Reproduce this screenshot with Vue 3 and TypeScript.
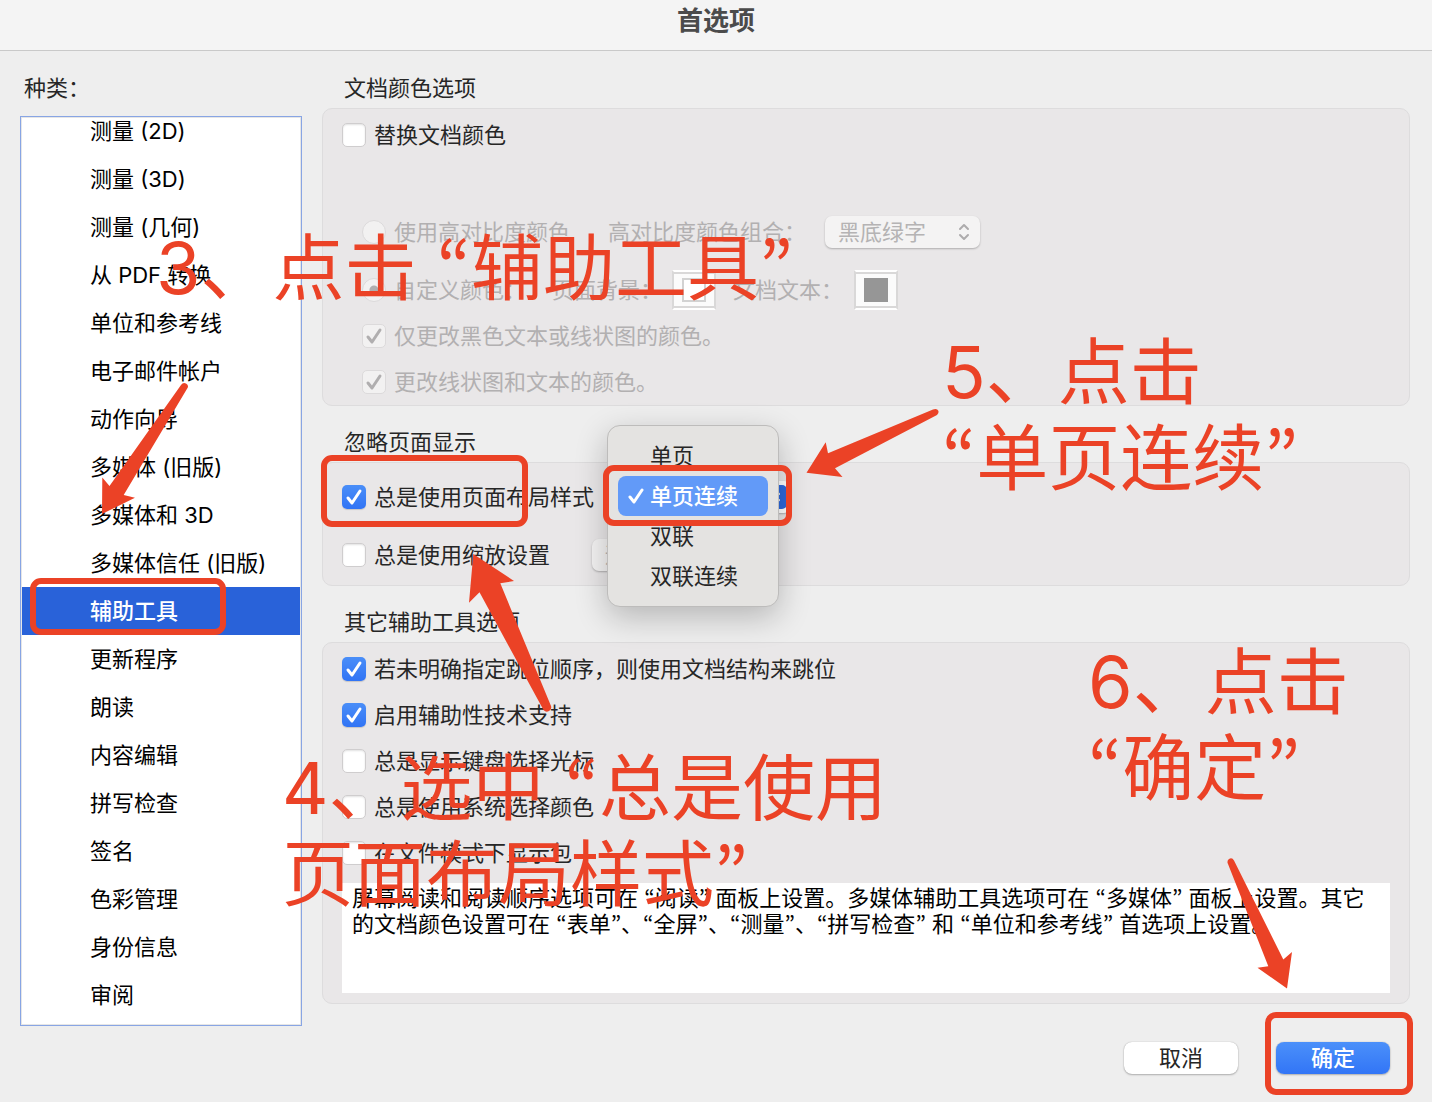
<script setup lang="ts">
import { ref } from 'vue'

interface Option {
  id: string
  label: string
  checked: boolean
}

interface Step {
  id: string
  lines: string[]
}

const categories: string[] = [
  '测量 (2D)',
  '测量 (3D)',
  '测量 (几何)',
  '从 PDF 转换',
  '单位和参考线',
  '电子邮件帐户',
  '动作向导',
  '多媒体 (旧版)',
  '多媒体和 3D',
  '多媒体信任 (旧版)',
  '辅助工具',
  '更新程序',
  '朗读',
  '内容编辑',
  '拼写检查',
  '签名',
  '色彩管理',
  '身份信息',
  '审阅',
]
const activeCategory = ref('辅助工具')

const replaceColors = ref(false)
const colorMode = ref('custom')
const colorOptions = ref<Option[]>([
  { id: 'only-black', label: '仅更改黑色文本或线状图的颜色。', checked: true },
  { id: 'line-art', label: '更改线状图和文本的颜色。', checked: true },
])

const useLayout = ref(true)
const useZoom = ref(false)
const layouts: string[] = ['单页', '单页连续', '双联', '双联连续']
const layout = ref('单页连续')

const otherOptions = ref<Option[]>([
  { id: 'tab-order', label: '若未明确指定跳位顺序，则使用文档结构来跳位', checked: true },
  { id: 'assistive', label: '启用辅助性技术支持', checked: true },
  { id: 'caret', label: '总是显示键盘选择光标', checked: false },
  { id: 'system-color', label: '总是使用系统选择颜色', checked: false },
  { id: 'portfolio', label: '在文件模式下显示包', checked: false },
])

const note =
  '屏幕阅读和阅读顺序选项可在 “阅读” 面板上设置。多媒体辅助工具选项可在 “多媒体” 面板上设置。其它的文档颜色设置可在 “表单”、“全屏”、“测量”、“拼写检查” 和 “单位和参考线” 首选项上设置。'

const steps: Step[] = [
  { id: 'step-3', lines: ['3、点击 “辅助工具”'] },
  { id: 'step-4', lines: ['4、选中 “总是使用', '页面布局样式”'] },
  { id: 'step-5', lines: ['5、点击', '“单页连续”'] },
  { id: 'step-6', lines: ['6、点击', '“确定”'] },
]

// Quotation marks are set in their own face, so cut the text around them.
const pieces = (text: string): string[] => text.split(/([“”])/).filter(Boolean)
const isQuote = (piece: string): boolean => piece === '“' || piece === '”'
</script>

<template>
  <div class="window">
    <header class="titlebar"><h1>首选项</h1></header>

    <main class="body">
      <nav class="sidebar" aria-labelledby="category-title">
        <h2 id="category-title" class="side-title">种类：</h2>
        <div class="list-box">
          <ul class="list">
            <li v-for="item in categories" :key="item">
              <button
                type="button"
                class="category"
                :class="{ active: item === activeCategory }"
                @click="activeCategory = item"
              >{{ item }}</button>
            </li>
          </ul>
        </div>
      </nav>

      <div class="content">
        <h2 class="heading">文档颜色选项</h2>
        <section class="panel colors">
          <div class="row">
            <label class="option"><input v-model="replaceColors" type="checkbox">替换文档颜色</label>
          </div>
          <div class="row nested contrast">
            <label class="option"><input v-model="colorMode" type="radio" value="contrast" disabled>使用高对比度颜色</label>
            <label for="combo" class="combo-label">高对比度颜色组合：</label>
            <span class="select-wrap combo">
              <select id="combo" disabled><option>黑底绿字</option></select>
              <svg class="chevrons" viewBox="0 0 12 18"><path d="M2 6l4-4 4 4M2 12l4 4 4-4" /></svg>
            </span>
          </div>
          <div class="row nested custom">
            <label class="option"><input v-model="colorMode" type="radio" value="custom" disabled>自定义颜色：</label>
            <span class="swatch-label page">页面背景：</span>
            <button type="button" class="swatch" disabled aria-label="页面背景"><span class="chip light"></span></button>
            <span class="swatch-label doc">文档文本：</span>
            <button type="button" class="swatch" disabled aria-label="文档文本"><span class="chip"></span></button>
          </div>
          <div v-for="option in colorOptions" :key="option.id" class="row nested">
            <label class="option"><input v-model="option.checked" type="checkbox" disabled>{{ option.label }}</label>
          </div>
        </section>

        <h2 class="heading">忽略页面显示</h2>
        <section class="panel display">
          <div class="row">
            <label class="option layout-option"><input v-model="useLayout" type="checkbox">总是使用页面布局样式</label>
            <span class="select-wrap layout">
              <select v-model="layout" aria-label="页面布局样式">
                <option v-for="name in layouts" :key="name">{{ name }}</option>
              </select>
              <span class="cap"><svg class="cap-icon" viewBox="0 0 12 18"><path d="M2 6l4-4 4 4M2 12l4 4 4-4" /></svg></span>
              <span class="menu" role="menu">
                <button
                  v-for="name in layouts"
                  :key="name"
                  type="button"
                  role="menuitemradio"
                  class="menu-item"
                  :class="{ picked: name === layout }"
                  @click="layout = name"
                >
                  <svg v-if="name === layout" class="tick" viewBox="0 0 16 16"><path d="M2 9l4 5 8-12" /></svg>{{ name }}
                </button>
              </span>
            </span>
          </div>
          <div class="row">
            <label class="option zoom-option"><input v-model="useZoom" type="checkbox">总是使用缩放设置</label>
            <span class="select-wrap zoom">
              <select aria-label="缩放" disabled><option>适合页面</option></select>
            </span>
          </div>
        </section>

        <h2 class="heading">其它辅助工具选项</h2>
        <section class="panel others">
          <div v-for="option in otherOptions" :key="option.id" class="row">
            <label class="option"><input v-model="option.checked" type="checkbox">{{ option.label }}</label>
          </div>
          <p class="note"><span v-for="(piece, i) in pieces(note)" :key="i" :class="{ quote: isQuote(piece) }">{{ piece }}</span></p>
        </section>
      </div>
    </main>

    <footer class="actions">
      <button type="button" class="action">取消</button>
      <button type="button" class="action primary">确定</button>
    </footer>

    <div class="notes">
      <svg class="marks" width="1432" height="1102" viewBox="0 0 1432 1102">
        <g class="frames">
          <rect x="33" y="581" width="190" height="51" rx="8" />
          <rect x="324" y="458" width="201" height="66" rx="8" />
          <rect x="606" y="468" width="183" height="55" rx="8" />
          <rect x="1268" y="1015" width="142" height="77" rx="8" />
        </g>
        <path d="M102 514L102.300 477.500L109.500 486L181 385Q183 382 186 383.500Q189 385 187.500 388L123.700 495L135 497.700Z" />
        <path d="M806.500 472.700L825.700 442.300L828 453.300L933 409.500Q937 408 938.500 411Q939 413 937 415L835 468.300L842.500 477Z" />
        <path d="M473.300 554L514 581L500.300 583.300L551 706Q552 709 549 711Q546 713 543.500 710L479.500 592.300L469 602.700Z" />
        <path d="M1287 988.500L1292 952L1283.300 959.500L1234 860.500Q1232 857 1229 859Q1226.500 861 1228 864L1268.300 966.300L1257.500 967.700Z" />
      </svg>
      <p v-for="step in steps" :key="step.id" class="step" :class="step.id">
        <span v-for="line in step.lines" :key="line" class="line"><span v-for="(piece, i) in pieces(line)" :key="i" :class="{ quote: isQuote(piece) }">{{ piece }}</span></span>
      </p>
    </div>
  </div>
</template>

<style>
body {
  margin: 0;
  background: #eeeeee;
}
</style>

<style scoped>
* {
  box-sizing: border-box;
}

.window {
  position: relative;
  display: flex;
  flex-direction: column;
  min-height: 100vh;
  overflow: hidden;
  background: #eeeeee;
  color: #262626;
  font: 22px/40px Inter, "Noto Sans CJK SC", sans-serif;
}

button,
select {
  margin: 0;
  border: 0;
  color: inherit;
  font: inherit;
}

.quote {
  font-family: "Noto Sans CJK KR", sans-serif;
  line-height: 1;
}

.titlebar {
  height: 51px;
  border-bottom: 1px solid #c9c9c9;
  background: #f4f4f4;
}

.titlebar h1 {
  margin: 0;
  color: #4b4b4b;
  font-size: 26px;
  font-weight: 700;
  line-height: 42px;
  text-align: center;
}

.body {
  display: flex;
  gap: 20px;
  padding: 1px 22px 0 20px;
}

.sidebar {
  display: flex;
  flex: 0 0 282px;
  flex-direction: column;
}

.side-title,
.heading {
  margin: 0;
  padding-top: 16px;
  font-size: 22px;
  font-weight: 400;
  line-height: 40px;
}

.side-title {
  padding-left: 4px;
  margin-bottom: 8px;
}

.heading {
  padding-left: 22px;
}

.list-box {
  height: 910px;
  overflow: hidden;
  border: 1px solid #88a5e4;
  background: #fff;
  box-shadow: inset 0 0 0 1px #e6e6e6;
}

.list {
  margin: -10px 1px 0;
  padding: 0;
  list-style: none;
}

.category {
  display: block;
  width: 100%;
  height: 48px;
  padding: 0 0 0 68px;
  background: none;
  color: #000;
  line-height: 48px;
  text-align: left;
}

.category.active {
  background: #2962d9;
  color: #fff;
  font-weight: 500;
}

.content {
  flex: 1;
  min-width: 0;
}

.panel {
  border: 1px solid #dddcdd;
  border-radius: 10px;
  background: #e9e7e8;
  padding: 3px 19px 0;
}

.row {
  display: flex;
  align-items: center;
  height: 46px;
  white-space: nowrap;
}

.nested {
  padding-left: 20px;
  color: #b2b0b1;
}

.contrast {
  margin-top: 51px;
}

.custom {
  margin-top: 12px;
}

.option {
  display: flex;
  align-items: center;
  gap: 8px;
}

.option input {
  appearance: none;
  flex: none;
  width: 24px;
  height: 24px;
  margin: 0;
  border: 1px solid #cfcdce;
  border-radius: 5px;
  background: #fff;
  box-shadow: inset 0 1px 2px rgba(0, 0, 0, 0.12);
}

.option input[type="radio"] {
  border-radius: 50%;
}

.option input:checked {
  border: 0;
  background: url("data:image/svg+xml,%3Csvg xmlns='http://www.w3.org/2000/svg' viewBox='0 0 24 24'%3E%3Cpath d='M6 13l4 5 8-12' fill='none' stroke='white' stroke-width='3' stroke-linecap='round' stroke-linejoin='round'/%3E%3C/svg%3E"), linear-gradient(#4a8ef8, #3174f5);
  box-shadow: 0 1px 1px rgba(0, 0, 0, 0.15);
}

.option input:disabled {
  border: 1px solid #dcdadb;
  background: #f2f1f1;
  box-shadow: none;
}

.option input[type="checkbox"]:disabled:checked {
  background: #f2f1f1 url("data:image/svg+xml,%3Csvg xmlns='http://www.w3.org/2000/svg' viewBox='0 0 24 24'%3E%3Cpath d='M6 13l4 5 8-12' fill='none' stroke='%23b0aeaf' stroke-width='3' stroke-linecap='round' stroke-linejoin='round'/%3E%3C/svg%3E") center / 24px;
}

.option input[type="radio"]:disabled:checked {
  background: radial-gradient(circle, #b0aeaf 4px, #f2f1f1 5px);
}

.select-wrap {
  position: relative;
  display: block;
  height: 32px;
}

.select-wrap select {
  appearance: none;
  display: block;
  width: 100%;
  height: 32px;
  padding: 0 13px;
  border-radius: 7px;
  background: #fff;
  box-shadow: 0 1px 2px rgba(0, 0, 0, 0.25);
  line-height: 32px;
}

.select-wrap select:disabled {
  background: #f4f3f3;
  color: #b5b3b4;
  opacity: 1;
}

.combo-label {
  margin-left: 38px;
  width: 217px;
}

.combo {
  width: 155px;
}

.chevrons {
  position: absolute;
  top: 7px;
  right: 10px;
  width: 12px;
  height: 18px;
}

.chevrons path,
.cap-icon path {
  fill: none;
  stroke: #adabac;
  stroke-width: 2;
  stroke-linecap: round;
  stroke-linejoin: round;
}

.cap-icon path {
  stroke: #fff;
}

.swatch-label {
  width: 120px;
}

.swatch-label.page {
  margin-left: 26px;
}

.swatch-label.doc {
  margin-left: 17px;
  width: 121px;
}

.swatch {
  display: grid;
  place-items: center;
  width: 44px;
  height: 40px;
  padding: 0;
  border: 2px solid #d9d8d8;
  border-top-color: #fff;
  border-bottom-color: #fff;
  background: #fbfbfb;
  box-shadow: inset 0 2px #d9d8d8, inset 0 -2px #d9d8d8;
}

.chip {
  width: 24px;
  height: 24px;
  background: #969696;
}

.chip.light {
  border: 2px solid #d2d2d2;
  background: #fff;
}

.display {
  padding: 11px 19px 7px;
}

.display .row + .row {
  margin-top: 12px;
}

.layout-option {
  width: 265px;
}

.zoom-option {
  width: 250px;
}

.layout {
  width: 184px;
}

.zoom {
  width: 160px;
}

.cap {
  position: absolute;
  top: 4px;
  right: 4px;
  display: grid;
  place-items: center;
  width: 24px;
  height: 24px;
  border-radius: 5px;
  background: #2e69dd;
}

.cap-icon {
  width: 12px;
  height: 18px;
}

.menu {
  position: absolute;
  z-index: 2;
  top: -56px;
  left: 0;
  width: 172px;
  padding: 10px;
  border: 1px solid #bdbcbb;
  border-radius: 13px;
  background: #e4e3e1;
  box-shadow: 0 10px 32px rgba(0, 0, 0, 0.24);
}

.menu-item {
  position: relative;
  display: block;
  width: 100%;
  height: 40px;
  padding: 0 0 0 32px;
  border-radius: 8px;
  background: none;
  line-height: 40px;
  text-align: left;
}

.menu-item.picked {
  background: #629af8;
  color: #fff;
  font-weight: 500;
}

.tick {
  position: absolute;
  top: 12px;
  left: 10px;
  width: 16px;
  height: 16px;
}

.tick path {
  fill: none;
  stroke: #fff;
  stroke-width: 3;
  stroke-linecap: round;
  stroke-linejoin: round;
}

.others {
  padding-bottom: 10px;
}

.note {
  height: 110px;
  margin: 7px 0 0;
  padding: 1px 10px 0 9px;
  border: 1px solid #fff;
  background: #fff;
  color: #000;
  line-height: 26px;
}

.actions {
  display: flex;
  justify-content: flex-end;
  gap: 38px;
  padding: 16px 42px 28px;
}

.action {
  width: 114px;
  height: 32px;
  padding: 0;
  border-radius: 8px;
  background: #fff;
  box-shadow: 0 0 1px rgba(0, 0, 0, 0.3), 0 1px 2px rgba(0, 0, 0, 0.25);
  line-height: 32px;
}

.action.primary {
  background: linear-gradient(#4b90fa, #3275f6);
  color: #fff;
  font-weight: 500;
}

.notes {
  position: absolute;
  z-index: 3;
  inset: 0;
  pointer-events: none;
}

.marks {
  position: absolute;
  top: 0;
  left: 0;
  fill: #eb4226;
}

.frames {
  fill: none;
  stroke: #eb4226;
  stroke-width: 6;
}

.step {
  position: absolute;
  margin: 0;
  color: #eb4226;
  font-size: 72px;
  line-height: 86px;
  white-space: nowrap;
}

.line {
  display: block;
}

.step-3 {
  top: 225px;
  left: 156px;
}

.step-4 {
  top: 745px;
  left: 282px;
}

.step-5 {
  top: 329px;
  left: 942px;
}

.step-6 {
  top: 639px;
  left: 1088px;
}
</style>
